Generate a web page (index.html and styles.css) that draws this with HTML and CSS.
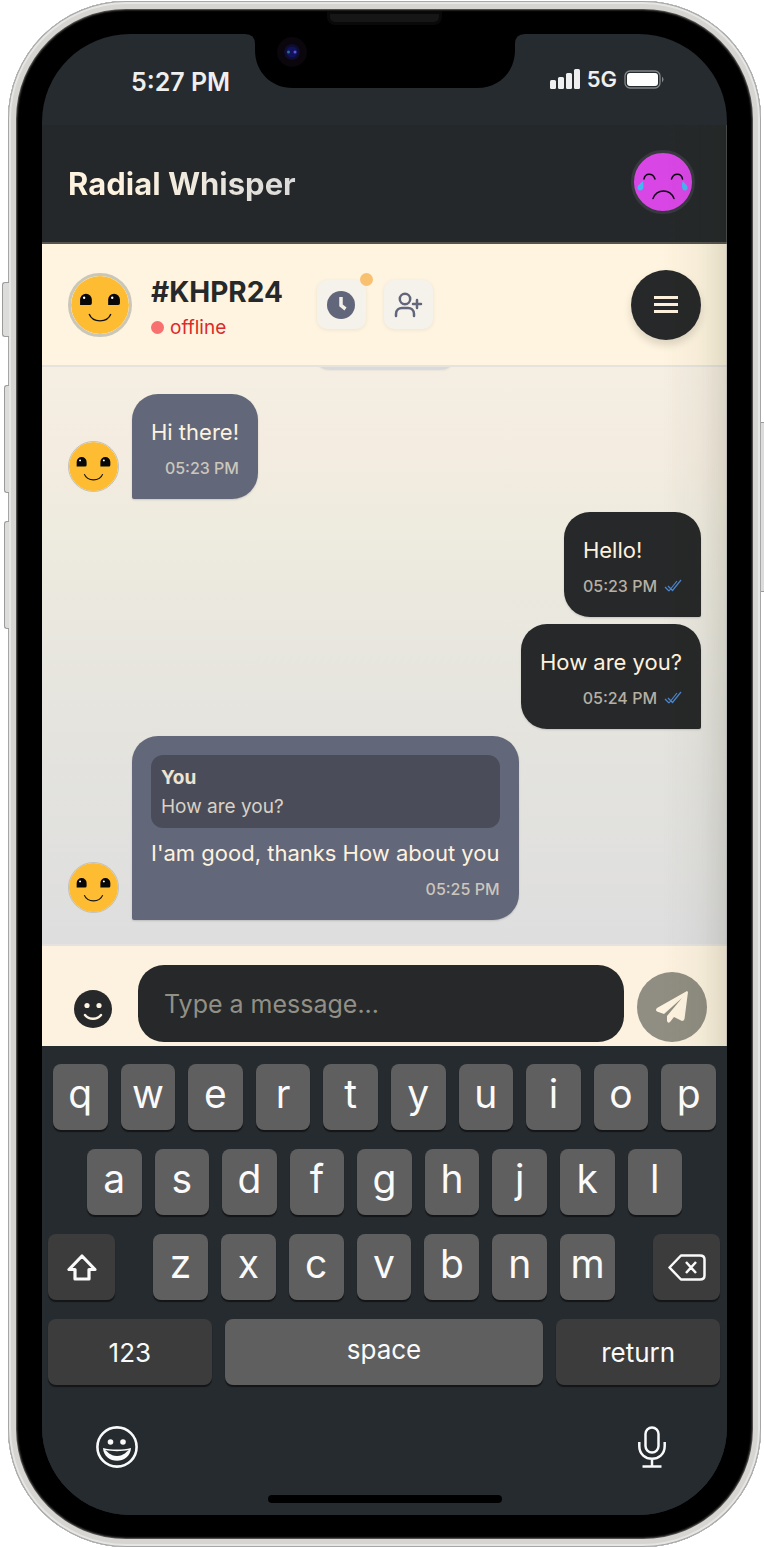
FILE: index.html
```html
<!DOCTYPE html>
<html lang="en">
<head>
<meta charset="utf-8">
<meta name="viewport" content="width=device-width, initial-scale=1">
<title>Radial Whisper</title>
<link rel="stylesheet" href="styles.css">
</head>
<body>
<svg class="defs" aria-hidden="true">
  <symbol id="smiley" viewBox="0 0 64 64">
    <circle cx="32" cy="32" r="32" fill="#fdbc32"/>
    <path d="M10 32V26a6.500 6.500 0 0 1 13 0v4q0 2-2 2zM41 32V26a6.500 6.500 0 0 1 13 0v4q0 2-2 2z" fill="#080808"/>
    <circle cx="14.500" cy="24" r="1.300" fill="#fff"/><circle cx="45.500" cy="24" r="1.300" fill="#fff"/>
    <path d="M20 42c4 10 20 10 24 0" fill="none" stroke="#111" stroke-width="1.500"/>
  </symbol>
  <symbol id="ticks" viewBox="0 0 18 14">
    <path d="M1 8l4 4M4 7l4.500 4.500L17 1M5 12l8-10" fill="none" stroke="#4d86cf" stroke-width="1.200"/>
  </symbol>
</svg>
<main class="device">
  <span class="side side-mute"></span>
  <span class="side side-up"></span>
  <span class="side side-down"></span>
  <span class="side side-power"></span>
  <span class="speaker"></span>
  <div class="screen">
    <div class="status">
      <time>5:27 PM</time>
      <div class="signal">
        <svg width="30" height="20" viewBox="0 0 30 20" fill="#efefef"><rect y="11" width="6" height="9" rx="1.500"/><rect x="8" y="8" width="6" height="12" rx="1.500"/><rect x="16" y="4" width="6" height="16" rx="1.500"/><rect x="24" width="6" height="20" rx="1.500"/></svg>
        <span>5G</span>
        <svg width="40" height="19" viewBox="0 0 40 19"><rect x="1" y="1" width="35" height="17" rx="5" fill="none" stroke="#83878a" stroke-width="1.300"/><rect x="3" y="3" width="31" height="13" rx="3" fill="#fff"/><path d="M38 6.500q3 3 0 6z" fill="#83878a"/></svg>
      </div>
    </div>
    <svg class="notch" width="280" height="55" viewBox="0 0 280 55">
      <path d="M0 0Q10 0 10 10v6C10 38 26 54 48 54H232C254 54 270 38 270 16v-6Q270 0 280 0z"/>
      <circle cx="47" cy="18" r="15" fill="#0a060b"/><circle cx="47" cy="18" r="8" fill="#0d0d30"/><circle cx="47" cy="18" r="5.500" fill="#12125c"/><circle cx="43.500" cy="18" r="1.500" fill="#2c6a8a"/><circle cx="50" cy="18" r="1.500" fill="#5a5ad0"/>
    </svg>
    <div class="app">
      <header class="top">
        <h1>Radial Whisper</h1>
        <svg class="me" viewBox="0 0 64 64" role="img" aria-label="Your avatar">
          <circle cx="32" cy="32" r="30.500" fill="#d946e6" stroke="#37393f" stroke-width="3"/>
          <g fill="none" stroke="#0c0610" stroke-width="1.500" stroke-linecap="round"><path d="M13 29c1-6.500 9-6.500 11 0M40.500 29c2-6.500 10-6.500 11 0M22 48.500c4-10 17-10 21 0"/></g>
          <path d="M12 31q1 5 0 8-3 3-5.500 0Q5.500 36 12 31zM51.500 31q-1 5 0 8 2.500 3 5 0 1-3-5-8z" fill="#42b7f2"/>
        </svg>
      </header>
      <section class="contact">
        <svg class="avatar avatar-lg" viewBox="0 0 64 64"><use href="#smiley"/></svg>
        <div class="who">
          <h2>#KHPR24</h2>
          <p class="presence">offline</p>
        </div>
        <div class="tools">
          <button class="tool has-dot" aria-label="History"><svg width="28" height="28" viewBox="0 0 28 28"><circle cx="14" cy="14" r="14" fill="#62667a"/><path d="M14 6v8.500l4.500 3.500" fill="none" stroke="#f4f0ea" stroke-width="3.500"/></svg></button>
          <button class="tool" aria-label="Add person"><svg width="30" height="28" viewBox="0 0 30 28" fill="none" stroke="#62667a" stroke-width="2.500" stroke-linecap="round"><circle cx="12" cy="8" r="5.200"/><path d="M3 25v-2c0-4 3-6 6-6h6c3 0 6 2 6 6v2M20 13h8M24 9v8"/></svg></button>
        </div>
        <button class="menu" aria-label="Menu"><svg width="24" height="17" viewBox="0 0 24 17" stroke="#fdf0dc" stroke-width="2.800"><path d="M0 1.500h24M0 8.500h24M0 15.500h24"/></svg></button>
      </section>
      <section class="messages">
        <div class="day"></div>
        <div class="row">
          <svg class="avatar" viewBox="0 0 64 64"><use href="#smiley"/></svg>
          <div class="bubble">
            <p>Hi there!</p>
            <div class="meta">05:23 PM</div>
          </div>
        </div>
        <div class="mine">
          <div class="bubble">
            <p>Hello!</p>
            <div class="meta">05:23 PM <svg width="18" height="14"><use href="#ticks"/></svg></div>
          </div>
          <div class="bubble">
            <p>How are you?</p>
            <div class="meta">05:24 PM <svg width="18" height="14"><use href="#ticks"/></svg></div>
          </div>
        </div>
        <div class="row">
          <svg class="avatar" viewBox="0 0 64 64"><use href="#smiley"/></svg>
          <div class="bubble">
            <blockquote><b>You</b><span>How are you?</span></blockquote>
            <p>I'am good, thanks How about you</p>
            <div class="meta">05:25 PM</div>
          </div>
        </div>
      </section>
      <form class="composer">
        <button type="button" class="smile" aria-label="Emoji"><svg width="38" height="38" viewBox="0 0 38 38"><circle cx="19" cy="19" r="19" fill="#262829"/><circle cx="13" cy="15.500" r="2.600" fill="#fdf3e0"/><circle cx="25" cy="15.500" r="2.600" fill="#fdf3e0"/><path d="M11 25c4 5 12 5 16 0" fill="none" stroke="#fdf3e0" stroke-width="2.400" stroke-linecap="round"/></svg></button>
        <input type="text" placeholder="Type a message..." aria-label="Message">
        <button type="button" class="send" aria-label="Send"><svg width="32" height="32" viewBox="0 0 32 32" fill="#fdf3e0"><path d="M31 0 1 17q-2 2 0 3.500L8 23 26 7 11 25v5q1 3 3 1l4-5 8 4q2 0 2.500-2L32 1z"/></svg></button>
      </form>
    </div>
    <div class="keyboard">
      <div class="keys keys-top"><button>q</button><button>w</button><button>e</button><button>r</button><button>t</button><button>y</button><button>u</button><button>i</button><button>o</button><button>p</button></div>
      <div class="keys keys-home"><button>a</button><button>s</button><button>d</button><button>f</button><button>g</button><button>h</button><button>j</button><button>k</button><button>l</button></div>
      <div class="keys-mod">
        <button class="dark" aria-label="Shift"><svg width="30" height="27" viewBox="0 0 30 27" fill="none" stroke="#fafafa" stroke-width="3.200" stroke-linejoin="round"><path d="M15 2 2 15.500h6V25h14v-9.500h6z"/></svg></button>
        <div class="keys"><button>z</button><button>x</button><button>c</button><button>v</button><button>b</button><button>n</button><button>m</button></div>
        <button class="dark" aria-label="Delete"><svg width="38" height="27" viewBox="0 0 38 27" fill="none" stroke="#fafafa" stroke-width="2.500" stroke-linejoin="round"><path d="M13 1.500H32q4.500 0 4.500 4v16q0 4-4.500 4H13L1.500 13.500zM18 8l10 11M28 8 18 19"/></svg></button>
      </div>
      <div class="keys-bottom"><button class="dark">123</button><button class="space">space</button><button class="dark">return</button></div>
      <div class="extras">
        <button aria-label="Emoji keyboard"><svg width="42" height="42" viewBox="0 0 42 42"><circle cx="21" cy="21" r="19.600" fill="none" stroke="#fafafa" stroke-width="2.600"/><circle cx="14.500" cy="16" r="2.800" fill="#fafafa"/><circle cx="27" cy="16" r="2.800" fill="#fafafa"/><path d="M7 22c8 2 20 2 28 0-1 17-27 17-28 0z" fill="#fafafa"/><path d="M9 24c7 1.500 17 1.500 24 0-2 1-5 6-12 6s-10-5-12-6z" fill="#262b2f"/></svg></button>
        <button aria-label="Dictate"><svg width="28" height="42" viewBox="0 0 28 42" fill="none" stroke="#fafafa" stroke-width="2.500"><rect x="7.500" y="1.500" width="13" height="25" rx="6.500"/><path d="M1.300 16v4c0 17 25.400 17 25.400 0v-4M14 33v7M4.500 40.500h19"/></svg></button>
      </div>
      <div class="home"></div>
    </div>
  </div>
</main>
</body>
</html>
```
FILE: styles.css
```css
* { box-sizing: border-box; }
body { margin: 0; background: #fff; font-family: Inter, "Liberation Sans", sans-serif; }
h1, h2, p, blockquote { margin: 0; }
button { border: 0; padding: 0; background: none; font: inherit; color: inherit; display: flex; align-items: center; justify-content: center; }
svg { display: block; flex: none; }
.defs { position: absolute; width: 0; height: 0; }

.device {
  position: relative;
  margin: 1px 3px 1px 8px;
  padding: 33px 34px 32px;
  border-radius: 118px;
  background: #000;
  box-shadow: inset 0 0 0 1px #a5a6a5, inset 0 0 0 3px #e6e6e4, inset 0 0 0 8px #d6d5d2, inset 0 0 2px 9px #6c6b69;
}
.side { position: absolute; left: -6px; width: 7px; background: #dcdcda; border: 1px solid #9b9b99; border-right: 0; border-radius: 3px 0 0 3px; }
.side-mute { top: 281px; height: 55px; }
.side-up { top: 384px; height: 108px; left: -4px; width: 5px; }
.side-down { top: 520px; height: 108px; left: -4px; width: 5px; }
.side-power { top: 421px; height: 170px; left: auto; right: -3px; width: 3px; border: solid #9b9b99; border-width: 1px 0; border-radius: 0; }
.speaker { position: absolute; top: 10px; left: 50%; width: 115px; height: 14px; margin-left: -58px; background: #161616; border: 3px solid #090909; border-radius: 0 0 8px 8px; }

.screen { position: relative; overflow: hidden; border-radius: 88px; background: #262b2f; }
.status { display: flex; align-items: flex-start; justify-content: space-between; padding: 32px 63px 27px 89px; color: #efefef; font-weight: 600; font-size: 25px; line-height: 32px; }
.signal { display: flex; align-items: center; gap: 7px; font-size: 22px; line-height: 26px; }
.notch { position: absolute; top: 0; left: 50%; margin-left: -140px; }

.app { position: relative; }
.app::after { content: ""; position: absolute; top: 0; right: 0; bottom: 0; width: 64px; pointer-events: none; background: linear-gradient(to left, rgba(40, 40, 10, .12), rgba(40, 40, 10, .04) 40%, transparent); border-right: 1px solid #77777766; }
.top { display: flex; justify-content: space-between; align-items: center; height: 119px; padding: 0 32px 3px 26px; background: #24282a; border-bottom: 2px solid #555452; }
h1 { font-size: 31px; line-height: 44px; font-weight: 700; color: transparent; background: linear-gradient(to right, #fff3df 20%, #dadada); background-clip: text; -webkit-background-clip: text; padding-top: 3px; }
.me { width: 64px; height: 64px; }

.contact { display: flex; align-items: center; padding: 0 26px; height: 123px; background: #fef4df; border-bottom: 2px solid #e5e3df; }
.avatar { width: 51px; height: 51px; border: 1px solid #c2c0bb; border-radius: 50%; margin-bottom: 7px; }
.avatar-lg { width: 64px; height: 64px; border: 3px solid #cac6b8; margin: 0; }
.who { margin-left: 19px; padding-top: 8px; }
h2 { font-size: 28px; line-height: 36px; font-weight: 700; color: #262829; }
.presence { display: flex; align-items: center; gap: 6px; font-size: 19px; line-height: 32px; color: #dc2a2a; padding-top: 2px; }
.presence::before { content: ""; width: 13px; height: 13px; border-radius: 50%; background: #f77170; }
.tools { display: flex; gap: 18px; margin-left: 34px; }
.tool { position: relative; width: 49px; height: 49px; border-radius: 10px; background: #f5f1eb; box-shadow: 0 1px 4px rgba(0, 0, 0, .07); }
.has-dot::after { content: ""; position: absolute; top: -7px; right: -7px; width: 13px; height: 13px; border-radius: 50%; background: #f9c070; }
.menu { margin-left: auto; width: 70px; height: 70px; border-radius: 50%; background: #262829; box-shadow: 0 5px 9px rgba(0, 0, 0, .14); }

.messages { display: flex; flex-direction: column; gap: 7px; padding: 0 26px 24px; background: linear-gradient(#f5eee2, #f4ece0 15%, #eeebdf 28%, #e5e4de 60%, #dededf); overflow: hidden; }
.day { align-self: center; width: 140px; height: 30px; margin: -28px 0 18px; border-radius: 14px; background: #d9dadb; box-shadow: 0 1px 2px #bbb8; }
.row { display: flex; align-items: flex-end; gap: 13px; }
.bubble { padding: 19px; border-radius: 26px 26px 26px 2px; background: #62677a; color: #fef2df; box-shadow: 0 1px 2px rgba(0, 0, 0, .15); }
.bubble p { font-size: 22px; line-height: 38px; }
.meta { display: flex; align-items: center; justify-content: flex-end; gap: 7px; margin-top: 5px; font-size: 16px; line-height: 24px; font-weight: 500; color: #ccc6bb; }
.mine { display: flex; flex-direction: column; align-items: flex-end; gap: 7px; margin-top: 6px; }
.mine .bubble { border-radius: 26px 26px 2px 26px; background: #262829; }
.mine .meta { color: #b6afa3; }
blockquote { display: flex; flex-direction: column; padding: 8px 10px 7px; margin-bottom: 6px; border-radius: 12px; background: #4a4d59; font-size: 19px; line-height: 29px; color: #d9d1c5; }
blockquote b { font-weight: 700; color: #ede3d3; }

.composer { display: flex; align-items: flex-end; gap: 13px; padding: 19px 20px 4px 32px; background: #fcf2df; border-top: 2px solid #e5e3e2; }
.smile { margin: 0 13px 14px 0; }
.composer input { flex: 1; min-width: 0; height: 77px; padding: 0 26px; border: 0; border-radius: 26px; background: #262829; color: #fef2df; font: 25px Inter, "Liberation Sans", sans-serif; }
.composer input::placeholder { color: #929085; opacity: 1; }
.send { width: 70px; height: 70px; border-radius: 50%; background: #908d82; }

.keyboard { display: flex; flex-direction: column; gap: 19px; padding: 18px 0 12px; color: #fafafa; background: #262b2f; }
.keys { display: flex; gap: 13px; }
.keys button { flex: 1; height: 66px; padding-bottom: 7px; font-size: 39px; }
.keys button, .dark, .space { border-radius: 8px; background: #5f5f5f; box-shadow: 0 2px 1px #131516; }
.keys-top { padding: 0 11px; }
.keys-home { padding: 0 45px; }
.keys-mod { display: grid; grid-template-columns: 67px 1fr 67px; gap: 38px; padding: 0 7px 0 6px; }
.keyboard .dark { background: #3c3c3c; }
.keys-bottom { display: grid; grid-template-columns: 164fr 319fr 164fr; gap: 13px; padding: 0 7px 0 6px; }
.keys-bottom button { height: 66px; font-size: 26px; }
.keys-bottom .space { padding-bottom: 5px; }
.extras { display: flex; justify-content: space-between; padding: 22px 61px 0 54px; }
.home { align-self: center; width: 234px; height: 8px; margin-top: 8px; border-radius: 4px; background: #000; }
```
